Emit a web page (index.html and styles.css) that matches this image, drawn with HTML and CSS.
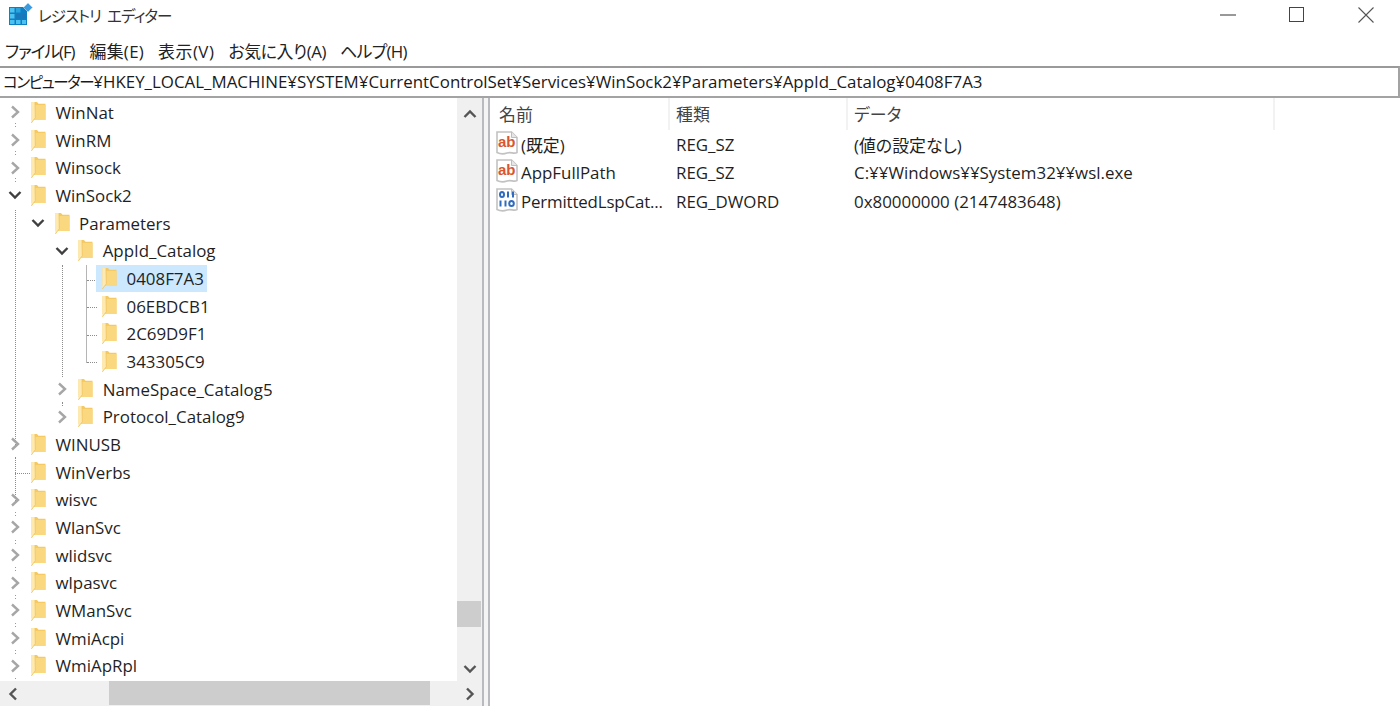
FILE: index.html
```html
<!DOCTYPE html>
<html lang="ja">
<head>
<meta charset="utf-8">
<title>レジストリ エディター</title>
<link rel="stylesheet" href="styles.css">
</head>
<body>
<svg class="defs" width="0" height="0" aria-hidden="true">
  <defs>
    <symbol id="folder" viewBox="0 0 15 21">
      <path d="M.5 0H6l1.500 1.800H14.500V18H.5z" fill="#f6ca62"/>
      <path d="M4 3H14.500V18H3z" fill="#fad87f"/>
      <path d="M.3 0H4L4.300 15.800 .3 21z" fill="#feeab0"/>
      <path d="M4 0 4.300 15.800 .3 21" fill="none" stroke="#efc35e" stroke-width=".8"/>
    </symbol>
    <symbol id="closed" viewBox="0 0 10 14"><path d="M2 1.500 8 7 2 12.500" fill="none" stroke="#a6a6a6" stroke-width="2.400"/></symbol>
    <symbol id="open" viewBox="0 0 14 10"><path d="M1.500 2 7 7.500 12.500 2" fill="none" stroke="#404040" stroke-width="2.400"/></symbol>
    <symbol id="doc" viewBox="0 0 22 24">
      <path d="M1 1H15.500L21 6.500V21.500C18 23.500 15 20.500 11 22S4 23 1 21.500z" fill="#fff" stroke="#c2c2c2" stroke-width="1.600"/>
      <path d="M15.500 1V6.500H21" fill="#e6e6e6" stroke="#bdbdbd" stroke-width="1"/>
    </symbol>
  </defs>
</svg>

<div class="window">
  <header class="titlebar">
    <svg class="app-icon" viewBox="0 0 24 24" aria-hidden="true">
      <rect x="0" y="4" width="18" height="18" fill="#0f7fc4"/>
      <g fill="#4cc2f1">
        <rect x="1" y="5" width="4.500" height="4.500"/><rect x="7" y="5" width="4.500" height="4.500" fill="#2aa3dd"/>
        <rect x="1" y="11" width="4.500" height="4.500"/><rect x="7" y="11" width="4.500" height="4.500" fill="#1b78b8"/><rect x="13" y="11" width="4" height="4.500" fill="#1b78b8"/>
        <rect x="1" y="17" width="4.500" height="4"/><rect x="7" y="17" width="4.500" height="4"/><rect x="13" y="17" width="4" height="4"/>
      </g>
      <path d="M19 0l4.500 4.500L19 9l-4.500-4.500z" fill="#3d9be0" stroke="#bfe0f7" stroke-width=".6"/>
    </svg>
    <h1 class="title">レジストリ エディター</h1>
    <div class="controls">
      <svg class="ctl ctl-min" viewBox="0 0 16 16"><path d="M0 8h16" stroke="#333" stroke-width="1"/></svg>
      <svg class="ctl ctl-max" viewBox="0 0 16 16"><rect x=".5" y=".5" width="14" height="14" fill="none" stroke="#444" stroke-width="1"/></svg>
      <svg class="ctl ctl-close" viewBox="0 0 16 16"><path d="M.5.500l15 15M15.500.500l-15 15" stroke="#555" stroke-width="1.100"/></svg>
    </div>
  </header>

  <nav class="menubar">
    <span class="menu-item m-file">ファイル(F)</span>
    <span class="menu-item m-edit">編集(E)</span>
    <span class="menu-item m-view">表示(V)</span>
    <span class="menu-item m-fav">お気に入り(A)</span>
    <span class="menu-item m-help">ヘルプ(H)</span>
  </nav>

  <div class="address"><span class="path-root">コンピューター</span>¥HKEY_LOCAL_MACHINE¥SYSTEM¥CurrentControlSet¥Services¥WinSock2¥Parameters¥AppId_Catalog¥0408F7A3</div>

  <main class="panes">
    <section class="tree-pane">
      <div class="tree-body">
        <div class="tree">
          <i class="guide g-stub-top"></i>
          <i class="guide g-root"></i>
          <i class="guide g-root-low"></i>
          <i class="guide g-stub-low"></i>
          <i class="guide g-d1"></i>
          <i class="guide g-d1-stub"></i>
          <i class="guide g-d2"></i>
          <i class="guide g-h1"></i>
          <i class="guide g-h2"></i>
          <i class="guide g-h3"></i>
          <i class="guide g-h4"></i>
          <i class="guide g-leaf"></i>
          <div class="row d0"><span class="twist"><svg class="chev-c"><use href="#closed"/></svg></span><span class="node"><svg class="folder"><use href="#folder"/></svg><span class="label">WinNat</span></span></div>
          <div class="row d0"><span class="twist"><svg class="chev-c"><use href="#closed"/></svg></span><span class="node"><svg class="folder"><use href="#folder"/></svg><span class="label">WinRM</span></span></div>
          <div class="row d0"><span class="twist"><svg class="chev-c"><use href="#closed"/></svg></span><span class="node"><svg class="folder"><use href="#folder"/></svg><span class="label">Winsock</span></span></div>
          <div class="row d0"><span class="twist"><svg class="chev-o"><use href="#open"/></svg></span><span class="node"><svg class="folder"><use href="#folder"/></svg><span class="label">WinSock2</span></span></div>
          <div class="row d1"><span class="twist"><svg class="chev-o"><use href="#open"/></svg></span><span class="node"><svg class="folder"><use href="#folder"/></svg><span class="label">Parameters</span></span></div>
          <div class="row d2"><span class="twist"><svg class="chev-o"><use href="#open"/></svg></span><span class="node"><svg class="folder"><use href="#folder"/></svg><span class="label">AppId_Catalog</span></span></div>
          <div class="row d3"><span class="twist leaf"></span><span class="node selected"><svg class="folder"><use href="#folder"/></svg><span class="label">0408F7A3</span></span></div>
          <div class="row d3"><span class="twist leaf"></span><span class="node"><svg class="folder"><use href="#folder"/></svg><span class="label">06EBDCB1</span></span></div>
          <div class="row d3"><span class="twist leaf"></span><span class="node"><svg class="folder"><use href="#folder"/></svg><span class="label">2C69D9F1</span></span></div>
          <div class="row d3"><span class="twist leaf"></span><span class="node"><svg class="folder"><use href="#folder"/></svg><span class="label">343305C9</span></span></div>
          <div class="row d2"><span class="twist"><svg class="chev-c"><use href="#closed"/></svg></span><span class="node"><svg class="folder"><use href="#folder"/></svg><span class="label">NameSpace_Catalog5</span></span></div>
          <div class="row d2"><span class="twist"><svg class="chev-c"><use href="#closed"/></svg></span><span class="node"><svg class="folder"><use href="#folder"/></svg><span class="label">Protocol_Catalog9</span></span></div>
          <div class="row d0"><span class="twist"><svg class="chev-c"><use href="#closed"/></svg></span><span class="node"><svg class="folder"><use href="#folder"/></svg><span class="label">WINUSB</span></span></div>
          <div class="row d0"><span class="twist leaf"></span><span class="node"><svg class="folder"><use href="#folder"/></svg><span class="label">WinVerbs</span></span></div>
          <div class="row d0"><span class="twist"><svg class="chev-c"><use href="#closed"/></svg></span><span class="node"><svg class="folder"><use href="#folder"/></svg><span class="label">wisvc</span></span></div>
          <div class="row d0"><span class="twist"><svg class="chev-c"><use href="#closed"/></svg></span><span class="node"><svg class="folder"><use href="#folder"/></svg><span class="label">WlanSvc</span></span></div>
          <div class="row d0"><span class="twist"><svg class="chev-c"><use href="#closed"/></svg></span><span class="node"><svg class="folder"><use href="#folder"/></svg><span class="label">wlidsvc</span></span></div>
          <div class="row d0"><span class="twist"><svg class="chev-c"><use href="#closed"/></svg></span><span class="node"><svg class="folder"><use href="#folder"/></svg><span class="label">wlpasvc</span></span></div>
          <div class="row d0"><span class="twist"><svg class="chev-c"><use href="#closed"/></svg></span><span class="node"><svg class="folder"><use href="#folder"/></svg><span class="label">WManSvc</span></span></div>
          <div class="row d0"><span class="twist"><svg class="chev-c"><use href="#closed"/></svg></span><span class="node"><svg class="folder"><use href="#folder"/></svg><span class="label">WmiAcpi</span></span></div>
          <div class="row d0"><span class="twist"><svg class="chev-c"><use href="#closed"/></svg></span><span class="node"><svg class="folder"><use href="#folder"/></svg><span class="label">WmiApRpl</span></span></div>
        </div>
        <div class="vscroll">
          <svg class="sb-arrow" viewBox="0 0 14 10"><path d="M1.500 8 7 2.500 12.500 8" fill="none" stroke="#555" stroke-width="2.400"/></svg>
          <div class="vtrack"><div class="vthumb"></div></div>
          <svg class="sb-arrow" viewBox="0 0 14 10"><path d="M1.500 2 7 7.500 12.500 2" fill="none" stroke="#555" stroke-width="2.400"/></svg>
        </div>
      </div>
      <div class="hscroll">
        <svg class="sb-arrow-h" viewBox="0 0 10 14"><path d="M8 1.500 2.500 7 8 12.500" fill="none" stroke="#555" stroke-width="2.400"/></svg>
        <div class="htrack"><div class="hthumb"></div></div>
        <svg class="sb-arrow-h" viewBox="0 0 10 14"><path d="M2 1.500 7.500 7 2 12.500" fill="none" stroke="#555" stroke-width="2.400"/></svg>
      </div>
    </section>

    <div class="splitter"></div>

    <section class="list-pane">
      <div class="list-head">
        <div class="col c-name">名前</div>
        <div class="col c-type">種類</div>
        <div class="col c-data">データ</div>
      </div>
      <div class="list-row">
        <div class="cell c-name"><svg class="val-icon" viewBox="0 0 22 24"><use href="#doc"/><text x="2" y="16" class="ab">ab</text></svg><span>(既定)</span></div>
        <div class="cell c-type">REG_SZ</div>
        <div class="cell c-data">(値の設定なし)</div>
      </div>
      <div class="list-row">
        <div class="cell c-name"><svg class="val-icon" viewBox="0 0 22 24"><use href="#doc"/><text x="2" y="16" class="ab">ab</text></svg><span>AppFullPath</span></div>
        <div class="cell c-type">REG_SZ</div>
        <div class="cell c-data">C:¥¥Windows¥¥System32¥¥wsl.exe</div>
      </div>
      <div class="list-row">
        <div class="cell c-name"><svg class="val-icon" viewBox="0 0 22 24"><use href="#doc"/>
          <g fill="none" stroke="#2f6cc0" stroke-width="2"><ellipse cx="6" cy="6.500" rx="2" ry="2.500"/><path d="M12 3.500v6M17 3.500v6"/><path d="M4.500 12.500v6M9.500 12.500v6"/><ellipse cx="15.500" cy="15.500" rx="2.300" ry="2.500"/></g></svg><span class="tight">PermittedLspCat...</span></div>
        <div class="cell c-type">REG_DWORD</div>
        <div class="cell c-data">0x80000000 (2147483648)</div>
      </div>
    </section>
  </main>
</div>
</body>
</html>
```
FILE: styles.css
```css
* { box-sizing: border-box; }
html, body { margin: 0; height: 100%; }
body {
  background: #fff;
  color: #1f1f1f;
  font-family: "Open Sans", "Noto Sans CJK JP", sans-serif;
  font-size: 16.900px;
  font-feature-settings: "palt";
  overflow: hidden;
}
.defs { position: absolute; }
.window { width: 1400px; height: 706px; display: flex; flex-direction: column; }

.titlebar { height: 33px; display: flex; align-items: center; padding-left: 9px; flex: none; }
.app-icon { width: 24px; height: 24px; margin-right: 5px; margin-top: -3px; }
.title { margin: 0; font-size: 15.500px; font-weight: 400; color: #333; margin-top: -3px; letter-spacing: -.9px; word-spacing: 3px; }
.controls { margin-left: auto; display: flex; align-items: center; }
.ctl { display: block; margin-top: -3px; }
.ctl-min { width: 16px; height: 16px; margin-right: 53px; }
.ctl-max { width: 16px; height: 16px; margin-right: 53px; }
.ctl-close { width: 16px; height: 16px; margin-right: 26px; }

.menubar { height: 33px; display: flex; align-items: center; gap: 14px; padding: 1px 0 0 5px; flex: none; background: #fff; }
.menu-item { color: #222; }
.m-file { letter-spacing: -1.100px; margin-right: 1px; }
.m-edit { letter-spacing: .3px; }
.m-view { letter-spacing: .5px; }
.m-fav { letter-spacing: -.4px; }
.m-help { letter-spacing: -.7px; }

.address {
  height: 32px;
  flex: none;
  border: 2px solid #a3a3a3;
  border-width: 2px 2px 2px 0;
  padding-left: 3px;
  line-height: 28px;
  white-space: nowrap;
  color: #1a1a1a;
  border-top-color: #9a9a9a;
}
.path-root { font-size: 15.500px; letter-spacing: -1.400px; }

.panes { flex: 1; display: flex; min-height: 0; }
.tree-pane { width: 482px; flex: none; display: flex; flex-direction: column; }
.tree-body { flex: 1; display: flex; min-height: 0; }
.tree { position: relative; flex: 1; overflow: hidden; padding-top: .5px; }
.row { height: 27.680px; display: flex; align-items: center; white-space: nowrap; position: relative; }
.d0 { padding-left: 0; }
.d1 { padding-left: 23.600px; }
.d2 { padding-left: 47.200px; }
.d3 { padding-left: 71px; }
.twist { width: 25px; flex: none; display: flex; align-items: center; justify-content: center; padding-left: 4px; }
.chev-c { width: 10px; height: 14px; display: block; }
.chev-o { width: 14px; height: 10px; display: block; }
.node { height: 100%; display: flex; align-items: center; padding: 0 3px 0 6px; }
.selected { background: #cce8ff; }
.folder { width: 15px; height: 21px; flex: none; margin-right: 9.500px; }
.label { color: #1f1f1f; }

.guide { position: absolute; display: block; }
.g-root { left: 15px; top: 112px; height: 237px; border-left: 1px dotted #8c8c8c; }
.g-root-low { left: 15px; top: 359px; height: 44px; border-left: 1px dotted #8c8c8c; }
.g-stub-top, .g-stub-low {
  left: 15px;
  width: 1px;
  background: repeating-linear-gradient(#999 0 1px, transparent 1px 3px, #999 3px 4px, transparent 4px 27.680px);
}
.g-stub-top { top: 25px; height: 60px; }
.g-stub-low { top: 414px; height: 170px; }
.g-d1 { left: 62px; top: 167px; height: 112px; border-left: 1px dotted #8c8c8c; }
.g-d1-stub { left: 62px; top: 304px; height: 4px; border-left: 1px dotted #8c8c8c; }
.g-d2 { left: 86px; top: 167px; height: 98px; border-left: 1px solid #b5b5b5; }
.g-h1, .g-h2, .g-h3, .g-h4 { left: 87px; width: 10px; border-top: 1px dotted #8c8c8c; }
.g-h1 { top: 182px; }
.g-h2 { top: 209px; }
.g-h3 { top: 237px; }
.g-h4 { top: 264px; }
.g-leaf { left: 15px; top: 375px; width: 15px; border-top: 1px dotted #8c8c8c; }

.vscroll { width: 25px; flex: none; background: #f0f0f0; display: flex; flex-direction: column; align-items: center; }
.sb-arrow { width: 14px; height: 10px; flex: none; margin: 11px 0 7px; }
.vtrack { flex: 1; width: 100%; display: flex; flex-direction: column; justify-content: flex-end; padding-bottom: 26px; }
.vthumb { height: 26px; width: 24px; background: #cdcdcd; margin-right: 1px; }
.hscroll { height: 25px; flex: none; background: #f0f0f0; display: flex; align-items: center; }
.sb-arrow-h { width: 10px; height: 14px; flex: none; margin: 0 7px 0 8px; }
.htrack { flex: 1; height: 100%; display: flex; padding-left: 84px; }
.hthumb { width: 321px; height: 24px; background: #cdcdcd; }

.splitter { width: 8px; flex: none; border-left: 2px solid #b9b9c0; border-right: 2px solid #b9b9c0; background: #f4f4f4; }

.list-pane { flex: 1; min-width: 0; }
.list-head { display: flex; height: 32px; align-items: flex-start; }
.col { height: 32px; line-height: 33px; border-right: 2px solid #f2f2f2; color: #444; }
.c-name { width: 180px; flex: none; padding-left: 9px; }
.c-type { width: 178px; flex: none; padding-left: 6px; }
.c-data { width: 427px; flex: none; padding-left: 6px; }
.list-row { height: 28.500px; display: flex; align-items: center; }
.cell { white-space: nowrap; }
.cell.c-name { padding-left: 6px; display: flex; align-items: center; gap: 3px; }
.tight { letter-spacing: -.17px; }
.val-icon { width: 22px; height: 24px; flex: none; margin-top: -3px; }
.ab { font: 700 15px "Liberation Sans", sans-serif; fill: #d9562f; }
```
